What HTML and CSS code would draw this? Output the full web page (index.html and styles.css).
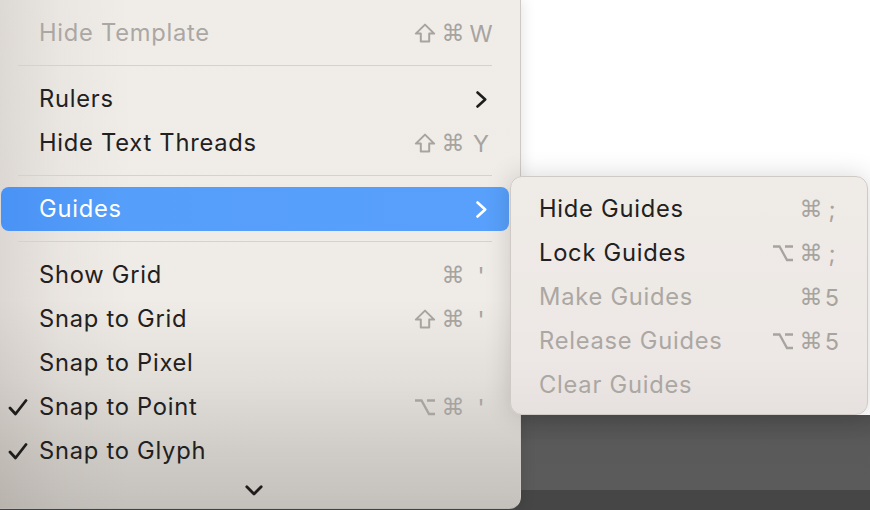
FILE: index.html
```html
<!DOCTYPE html>
<html>
<head>
<meta charset="utf-8">
<link rel="stylesheet" href="styles.css">
</head>
<body>
<div class="screen">
  <div class="canvas"></div>
  <div class="dock"></div>
  <div class="bar"></div>

  <div class="menu main">
    <div class="item disabled"><span class="check"></span><span class="label">Hide Template</span><span class="keys"><span class="k"><svg class="mod" width="22" height="20" viewBox="0 0 22 20"><path d="M11 1.6 L20.2 10.6 H15.2 V18.6 H6.8 V10.6 H1.8 Z" fill="none" stroke="currentColor" stroke-width="2" stroke-linejoin="round"/></svg></span><span class="k sym">⌘</span><span class="k">W</span></span></div>
    <div class="sep"></div>
    <div class="item"><span class="check"></span><span class="label">Rulers</span><svg class="arrow" width="11" height="17" viewBox="0 0 11 17"><polyline points="1.5,1.5 9.2,8.5 1.5,15.5" fill="none" stroke="currentColor" stroke-width="2.6" stroke-linecap="round" stroke-linejoin="round"/></svg></div>
    <div class="item"><span class="check"></span><span class="label">Hide Text Threads</span><span class="keys"><span class="k"><svg class="mod" width="22" height="20" viewBox="0 0 22 20"><path d="M11 1.6 L20.2 10.6 H15.2 V18.6 H6.8 V10.6 H1.8 Z" fill="none" stroke="currentColor" stroke-width="2" stroke-linejoin="round"/></svg></span><span class="k sym">⌘</span><span class="k">Y</span></span></div>
    <div class="sep"></div>
    <div class="item active"><span class="check"></span><span class="label">Guides</span><svg class="arrow" width="11" height="17" viewBox="0 0 11 17"><polyline points="1.5,1.5 9.2,8.5 1.5,15.5" fill="none" stroke="currentColor" stroke-width="2.6" stroke-linecap="round" stroke-linejoin="round"/></svg></div>
    <div class="sep"></div>
    <div class="item"><span class="check"></span><span class="label">Show Grid</span><span class="keys"><span class="k"></span><span class="k sym">⌘</span><span class="k">'</span></span></div>
    <div class="item"><span class="check"></span><span class="label">Snap to Grid</span><span class="keys"><span class="k"><svg class="mod" width="22" height="20" viewBox="0 0 22 20"><path d="M11 1.6 L20.2 10.6 H15.2 V18.6 H6.8 V10.6 H1.8 Z" fill="none" stroke="currentColor" stroke-width="2" stroke-linejoin="round"/></svg></span><span class="k sym">⌘</span><span class="k">'</span></span></div>
    <div class="item"><span class="check"></span><span class="label">Snap to Pixel</span></div>
    <div class="item"><span class="check"><svg width="20" height="17" viewBox="0 0 20 17"><polyline points="2,9 7.5,15 18,1.5" fill="none" stroke="currentColor" stroke-width="2.8" stroke-linecap="round" stroke-linejoin="round"/></svg></span><span class="label">Snap to Point</span><span class="keys"><span class="k"><svg class="mod" width="22" height="18" viewBox="0 0 22 18"><path d="M1 2.5 H7.5 L15 16 H21 M13 2.5 H21" fill="none" stroke="currentColor" stroke-width="2.3" stroke-linejoin="miter"/></svg></span><span class="k sym">⌘</span><span class="k">'</span></span></div>
    <div class="item"><span class="check"><svg width="20" height="17" viewBox="0 0 20 17"><polyline points="2,9 7.5,15 18,1.5" fill="none" stroke="currentColor" stroke-width="2.8" stroke-linecap="round" stroke-linejoin="round"/></svg></span><span class="label">Snap to Glyph</span></div>
    <div class="more"><svg width="18" height="11" viewBox="0 0 18 11"><polyline points="1.8,1.8 9,9 16.2,1.8" fill="none" stroke="currentColor" stroke-width="2.8" stroke-linecap="round" stroke-linejoin="round"/></svg></div>
  </div>

  <div class="menu sub">
    <div class="item"><span class="label">Hide Guides</span><span class="keys"><span class="k"></span><span class="k sym">⌘</span><span class="k key">;</span></span></div>
    <div class="item"><span class="label">Lock Guides</span><span class="keys"><span class="k"><svg class="mod" width="22" height="18" viewBox="0 0 22 18"><path d="M1 2.5 H7.5 L15 16 H21 M13 2.5 H21" fill="none" stroke="currentColor" stroke-width="2.3" stroke-linejoin="miter"/></svg></span><span class="k sym">⌘</span><span class="k key">;</span></span></div>
    <div class="item disabled"><span class="label">Make Guides</span><span class="keys"><span class="k"></span><span class="k sym">⌘</span><span class="k key">5</span></span></div>
    <div class="item disabled"><span class="label">Release Guides</span><span class="keys"><span class="k"><svg class="mod" width="22" height="18" viewBox="0 0 22 18"><path d="M1 2.5 H7.5 L15 16 H21 M13 2.5 H21" fill="none" stroke="currentColor" stroke-width="2.3" stroke-linejoin="miter"/></svg></span><span class="k sym">⌘</span><span class="k key">5</span></span></div>
    <div class="item disabled"><span class="label">Clear Guides</span></div>
  </div>
</div>
</body>
</html>
```

FILE: styles.css
```css
html, body {
  margin: 0;
  padding: 0;
}
body {
  width: 870px;
  height: 510px;
  overflow: hidden;
  font-family: "Inter", "Liberation Sans", sans-serif;
}
.screen {
  position: relative;
  width: 870px;
  height: 510px;
  display: flex;
  flex-direction: column;
}
.canvas {
  height: 415px;
  background: #ffffff;
}
.dock {
  height: 75px;
  background: linear-gradient(to bottom, #4f4f4f 0, #5a5a5a 30px, #5b5b5b 100%);
}
.bar {
  flex: 1;
  background: #464646;
}

.menu {
  position: absolute;
  box-sizing: border-box;
  color: #222020;
  font-size: 23.7px;
  letter-spacing: 0.75px;
}
.main {
  left: 0;
  top: 0;
  width: 521px;
  height: 509px;
  padding-top: 11px;
  border-right: 1px solid #cdc9c4;
  border-bottom: 1px solid #bdb9b4;
  border-radius: 0 0 12px 0;
  background:
    linear-gradient(to right, rgba(120,110,100,0.16) 0, rgba(120,110,100,0.05) 60px, rgba(0,0,0,0) 130px),
    linear-gradient(to bottom, #f0ede9 0, #efebe7 300px, #e2deda 380px, #d0ccc7 450px, #c4c0bb 509px);
  box-shadow: 2px 0 14px rgba(0,0,0,0.10);
}
.sub {
  left: 510px;
  top: 176px;
  width: 358px;
  height: 239px;
  padding-top: 10px;
  border: 1px solid #cfcac6;
  border-radius: 12px;
  background: linear-gradient(to bottom, #efebe7 0, #ede8e5 180px, #e6e1de 100%);
  box-shadow: 0 0 26px rgba(0,0,0,0.16);
}

.item {
  display: flex;
  align-items: center;
  height: 44px;
  box-sizing: border-box;
}
.main .item {
  margin: 0 11px 0 1px;
  padding: 0 14px 0 7px;
  border-radius: 8px;
}
.sub .item {
  padding: 0 28px 0 28px;
}
.check {
  width: 31px;
  display: flex;
  align-items: center;
  color: #1f1d1b;
}
.check svg {
  display: block;
  margin-top: 1px;
}
.label {
  flex: 1;
  white-space: nowrap;
  padding-bottom: 2px;
}
.disabled {
  color: #aba7a3;
}
.keys {
  display: flex;
  align-items: center;
  color: #a7a39f;
  letter-spacing: 0;
}
.k {
  width: 28px;
  display: flex;
  justify-content: center;
  align-items: center;
  font-size: 23.5px;
}
.k.sym {
  font-family: "DejaVu Sans", sans-serif;
  font-size: 23px;
}
.k.key {
  width: 14px;
}
.mod {
  display: block;
}
.arrow {
  display: block;
  margin-right: 8px;
  color: #1f1d1b;
}
.active {
  background: linear-gradient(to right, #4a93f6 0, #559ef9 120px, #58a0fb 100%);
  color: #ffffff;
}
.active .arrow {
  color: #ffffff;
}
.sep {
  height: 1px;
  margin: 10px 28px 11px 18px;
  background: #d5d1cc;
}
.more {
  height: 34px;
  display: flex;
  align-items: center;
  justify-content: center;
  padding-right: 12px;
  color: #1f1d1b;
}
.more svg {
  display: block;
}
```
